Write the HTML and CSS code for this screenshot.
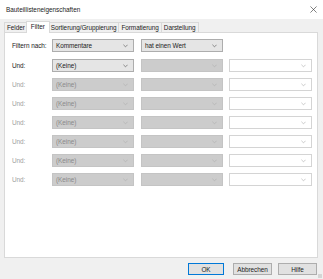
FILE: index.html
```html
<!DOCTYPE html>
<html>
<head>
<meta charset="utf-8">
<link rel="stylesheet" href="styles.css">
</head>
<body>
<div class="dialog">
  <div class="titlebar">
    <span class="title">Bauteillisteneigenschaften</span>
    <svg class="close" viewBox="0 0 8 8"><path d="M0.5 0.5 L7.5 7.5 M7.5 0.5 L0.5 7.5"/></svg>
  </div>
  <div class="main">
    <div class="tabs">
      <div class="tab">Felder</div>
      <div class="tab active">Filter</div>
      <div class="tab">Sortierung/Gruppierung</div>
      <div class="tab">Formatierung</div>
      <div class="tab">Darstellung</div>
    </div>
    <div class="panel">
      <div class="row first">
        <div class="label">Filtern nach:</div>
        <div class="combo c1"><span>Kommentare</span><svg class="chev" viewBox="0 0 6 4"><path d="M0.5 0.5 L3 3 L5.5 0.5"/></svg></div>
        <div class="combo c2"><span>hat einen Wert</span><svg class="chev" viewBox="0 0 6 4"><path d="M0.5 0.5 L3 3 L5.5 0.5"/></svg></div>
      </div>
      <div class="row">
        <div class="label">Und:</div>
        <div class="combo c1"><span>(Keine)</span><svg class="chev" viewBox="0 0 6 4"><path d="M0.5 0.5 L3 3 L5.5 0.5"/></svg></div>
        <div class="combo c2 dis"><svg class="chev" viewBox="0 0 6 4"><path d="M0.5 0.5 L3 3 L5.5 0.5"/></svg></div>
        <div class="combo c3"><svg class="chev" viewBox="0 0 6 4"><path d="M0.5 0.5 L3 3 L5.5 0.5"/></svg></div>
      </div>
      <div class="row off">
        <div class="label">Und:</div>
        <div class="combo c1 dis"><span>(Keine)</span><svg class="chev" viewBox="0 0 6 4"><path d="M0.5 0.5 L3 3 L5.5 0.5"/></svg></div>
        <div class="combo c2 dis"><svg class="chev" viewBox="0 0 6 4"><path d="M0.5 0.5 L3 3 L5.5 0.5"/></svg></div>
        <div class="combo c3"><svg class="chev" viewBox="0 0 6 4"><path d="M0.5 0.5 L3 3 L5.5 0.5"/></svg></div>
      </div>
      <div class="row off">
        <div class="label">Und:</div>
        <div class="combo c1 dis"><span>(Keine)</span><svg class="chev" viewBox="0 0 6 4"><path d="M0.5 0.5 L3 3 L5.5 0.5"/></svg></div>
        <div class="combo c2 dis"><svg class="chev" viewBox="0 0 6 4"><path d="M0.5 0.5 L3 3 L5.5 0.5"/></svg></div>
        <div class="combo c3"><svg class="chev" viewBox="0 0 6 4"><path d="M0.5 0.5 L3 3 L5.5 0.5"/></svg></div>
      </div>
      <div class="row off">
        <div class="label">Und:</div>
        <div class="combo c1 dis"><span>(Keine)</span><svg class="chev" viewBox="0 0 6 4"><path d="M0.5 0.5 L3 3 L5.5 0.5"/></svg></div>
        <div class="combo c2 dis"><svg class="chev" viewBox="0 0 6 4"><path d="M0.5 0.5 L3 3 L5.5 0.5"/></svg></div>
        <div class="combo c3"><svg class="chev" viewBox="0 0 6 4"><path d="M0.5 0.5 L3 3 L5.5 0.5"/></svg></div>
      </div>
      <div class="row off">
        <div class="label">Und:</div>
        <div class="combo c1 dis"><span>(Keine)</span><svg class="chev" viewBox="0 0 6 4"><path d="M0.5 0.5 L3 3 L5.5 0.5"/></svg></div>
        <div class="combo c2 dis"><svg class="chev" viewBox="0 0 6 4"><path d="M0.5 0.5 L3 3 L5.5 0.5"/></svg></div>
        <div class="combo c3"><svg class="chev" viewBox="0 0 6 4"><path d="M0.5 0.5 L3 3 L5.5 0.5"/></svg></div>
      </div>
      <div class="row off">
        <div class="label">Und:</div>
        <div class="combo c1 dis"><span>(Keine)</span><svg class="chev" viewBox="0 0 6 4"><path d="M0.5 0.5 L3 3 L5.5 0.5"/></svg></div>
        <div class="combo c2 dis"><svg class="chev" viewBox="0 0 6 4"><path d="M0.5 0.5 L3 3 L5.5 0.5"/></svg></div>
        <div class="combo c3"><svg class="chev" viewBox="0 0 6 4"><path d="M0.5 0.5 L3 3 L5.5 0.5"/></svg></div>
      </div>
      <div class="row off">
        <div class="label">Und:</div>
        <div class="combo c1 dis"><span>(Keine)</span><svg class="chev" viewBox="0 0 6 4"><path d="M0.5 0.5 L3 3 L5.5 0.5"/></svg></div>
        <div class="combo c2 dis"><svg class="chev" viewBox="0 0 6 4"><path d="M0.5 0.5 L3 3 L5.5 0.5"/></svg></div>
        <div class="combo c3"><svg class="chev" viewBox="0 0 6 4"><path d="M0.5 0.5 L3 3 L5.5 0.5"/></svg></div>
      </div>
    </div>
    <div class="footer">
      <div class="btn default">OK</div>
      <div class="btn">Abbrechen</div>
      <div class="btn">Hilfe</div>
    </div>
  </div>
  <div class="grip"></div>
</div>
</body>
</html>
```

FILE: styles.css
```css
html, body {
  margin: 0;
  padding: 0;
}
body {
  width: 323px;
  height: 279px;
  overflow: hidden;
  font-family: "Liberation Sans", "Noto Sans", sans-serif;
  font-size: 6.4px;
  letter-spacing: -0.05px;
  color: #1a1a1a;
  background: #f0f0f0;
}
.dialog {
  position: relative;
  width: 323px;
  height: 279px;
  display: flex;
  flex-direction: column;
}
.titlebar {
  height: 19px;
  background: #ffffff;
  display: flex;
  align-items: center;
  justify-content: space-between;
  padding: 0 6px 0 6px;
  box-sizing: border-box;
}
.title {
  font-size: 6.4px;
  letter-spacing: 0;
  color: #222;
}
.close {
  width: 7px;
  height: 7px;
  fill: none;
  stroke: #333;
  stroke-width: 0.7;
}
.main {
  flex: 1;
  display: flex;
  flex-direction: column;
  padding: 2px 5px 0 4px;
}
.tabs {
  display: flex;
  height: 11px;
  align-items: flex-end;
}
.tab {
  height: 9px;
  line-height: 9px;
  padding: 0 2px;
  border: 1px solid #d9d9d9;
  border-bottom: none;
  margin-right: -1px;
  background: #f0f0f0;
  color: #222;
  white-space: nowrap;
}
.tab.active {
  height: 11px;
  line-height: 10px;
  background: #ffffff;
  position: relative;
  z-index: 1;
  margin-bottom: -1px;
  padding: 0 4px;
  margin-left: -1px;
  margin-right: -2px;
}
.panel {
  background: #ffffff;
  border: 1px solid #d9d9d9;
  height: 226px;
  box-sizing: border-box;
  padding: 6px 0 0 7px;
  display: flex;
  flex-direction: column;
  gap: 6px;
}
.row {
  display: flex;
  align-items: center;
  height: 13px;
}
.row.first {
  margin-bottom: 1px;
}
.label {
  width: 40px;
  flex-shrink: 0;
  white-space: nowrap;
  color: #222;
}
.row.off .label {
  color: #a0a0a0;
}
.combo {
  position: relative;
  flex-shrink: 0;
  height: 13px;
  box-sizing: border-box;
  border: 1px solid #adadad;
  background: #e5e5e5;
  display: flex;
  align-items: center;
  padding-left: 3px;
  color: #222;
  white-space: nowrap;
}
.c1 { width: 82px; }
.c2 { width: 82px; margin-left: 7px; }
.c3 { width: 83px; margin-left: 6px; background: #ffffff; border-color: #d4d4d4; }
.combo.dis {
  background: #cccccc;
  border-color: #c4c4c4;
  color: #8a8a8a;
}
.chev {
  position: absolute;
  right: 5px;
  top: 4px;
  width: 5px;
  height: 4px;
  fill: none;
  stroke: #5a5a5a;
  stroke-width: 0.8;
}
.combo.dis .chev,
.c3 .chev {
  stroke: #b0b0b0;
}
.footer {
  display: flex;
  justify-content: flex-end;
  gap: 8px;
  padding-top: 5px;
  padding-right: 1px;
}
.btn {
  width: 37px;
  height: 12px;
  box-sizing: border-box;
  border: 1px solid #adadad;
  background: #e1e1e1;
  display: flex;
  align-items: center;
  justify-content: center;
  color: #222;
}
.btn.default {
  border-color: #0078d7;
  width: 36px;
  margin-right: 1px;
}
.btn:nth-child(2) { width: 39px; margin-right: -2px; }
.btn:nth-child(3) { width: 39px; }
.grip {
  position: absolute;
  right: 1px;
  bottom: 1px;
  width: 4px;
  height: 4px;
  background: radial-gradient(circle, #b5b5b5 0.6px, transparent 0.8px) 0 0 / 2px 2px;
}
```
